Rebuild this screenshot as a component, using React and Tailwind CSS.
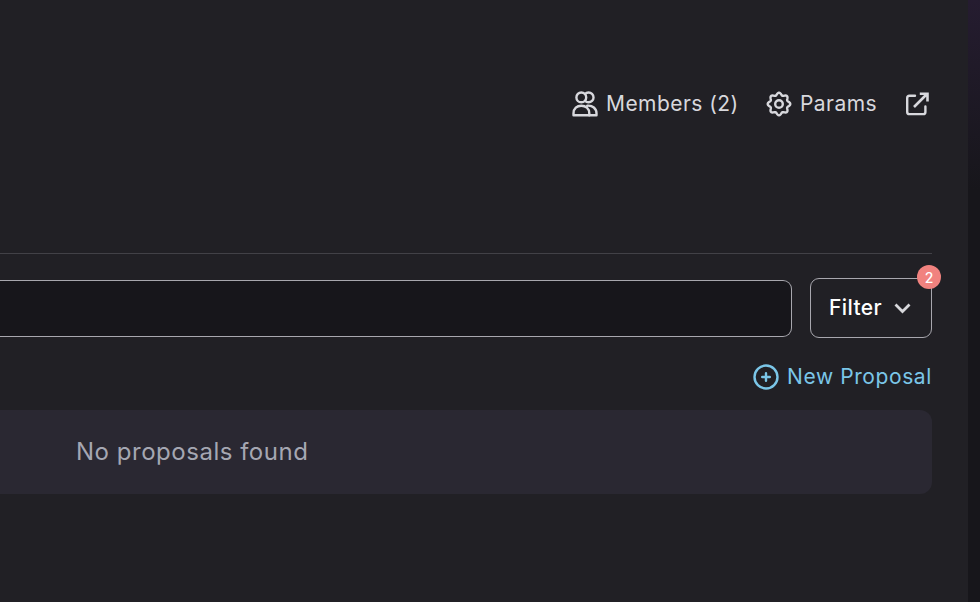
const gearPath =
  Array.from({ length: 96 }, (_, i) => {
    const angle = (i / 96) * Math.PI * 2;
    const radius = 10.1 + 1.2 * Math.cos(8 * angle);
    const x = (13 + radius * Math.cos(angle)).toFixed(2);
    const y = (13 + radius * Math.sin(angle)).toFixed(2);
    return `${i ? "L" : "M"}${x} ${y}`;
  }).join("") + "Z";

function Icon({ children }) {
  return (
    <svg className="size-[26px] shrink-0" viewBox="0 0 26 26" fill="none" stroke="currentColor" strokeWidth="2.4" strokeLinecap="round" strokeLinejoin="round">
      {children}
    </svg>
  );
}

export default function App() {
  return (
    <div className="flex h-[602px] w-[980px] overflow-hidden bg-[#17161b] font-['Inter',sans-serif]">
      <main className="w-[968px] bg-[#212025] pr-9">
        <header className="flex h-[253px] items-start justify-end pt-[91px] pr-0.5 text-[21px] leading-[26px] tracking-[.45px] text-[#d8d8dd]">
          <div className="flex">
            <Icon>
              <circle cx="9.3" cy="6.4" r="4.9" />
              <path d="M13 3.1A4.9 4.9 0 1 1 13 9.7" />
              <path d="M1.5 24.2V22.5C1.5 17.5 5 14.7 9.3 14.7S17.3 17.5 17.3 22.5V24.2Z" />
              <path d="M15.2 14.7C20.5 14.2 24.5 17.5 24.5 22.5V24.2H17.3" />
            </Icon>
            <span className="ml-2 w-[134px] whitespace-nowrap">Members (2)</span>
          </div>
          <div className="ml-[26px] flex">
            <Icon>
              <path d={gearPath} />
              <circle cx="13" cy="13" r="3.8" />
            </Icon>
            <span className="ml-2 w-[78px] whitespace-nowrap">Params</span>
          </div>
          <div className="ml-[26px]">
            <Icon>
              <path d="M11 4.7H5.4Q3.2 4.7 3.2 6.9V20.9Q3.2 23.1 5.4 23.1H19.2Q21.4 23.1 21.4 20.9V15.5" />
              <path d="M10 16L23 3M15.8 2.7H23.5V10.4" strokeWidth="2.6" strokeLinejoin="miter" strokeLinecap="butt" />
            </Icon>
          </div>
        </header>
        <section className="border-t border-[#424147] pt-6">
          <div className="flex items-center">
            <div className="h-[57px] w-[792px] rounded-r-[9px] border border-l-0 border-[#a8a7ae] bg-[#17161b]" />
            <button className="relative ml-[18px] flex h-[60px] w-[122px] items-center rounded-[9px] border border-[#a8a7ae] pl-[18px] text-[21px] font-medium tracking-[.4px] text-white">
              <span className="w-[65px] text-left">Filter</span>
              <svg className="h-[11px] w-[17px]" viewBox="0 0 17 11" fill="none" stroke="#d8d8dc" strokeWidth="2.8">
                <path d="M1.5 1.5L8.5 8.5L15.5 1.5" />
              </svg>
              <span className="absolute -top-[14px] -right-[10px] flex size-6 items-center justify-center rounded-full bg-[#f1827f] text-[14px] tracking-normal">2</span>
            </button>
          </div>
          <div className="mt-[26px] flex h-[26px] items-center justify-end text-[21px] tracking-[.6px] text-[#7bc6e8]">
            <Icon>
              <circle cx="13" cy="13" r="11.5" />
              <path d="M13 9.2V16.8M9.2 13H16.8" />
            </Icon>
            <span className="ml-2 w-[145px] whitespace-nowrap">New Proposal</span>
          </div>
          <div className="mt-5 flex h-[84px] items-center rounded-r-[12px] bg-[#2a2832] pl-[76px] text-2xl tracking-[.52px] text-[#a5a7b2]">
            No proposals found
          </div>
        </section>
      </main>
      <div className="h-[190px] w-3 bg-linear-to-b from-[#251c30] to-[#17161b]" />
    </div>
  );
}
